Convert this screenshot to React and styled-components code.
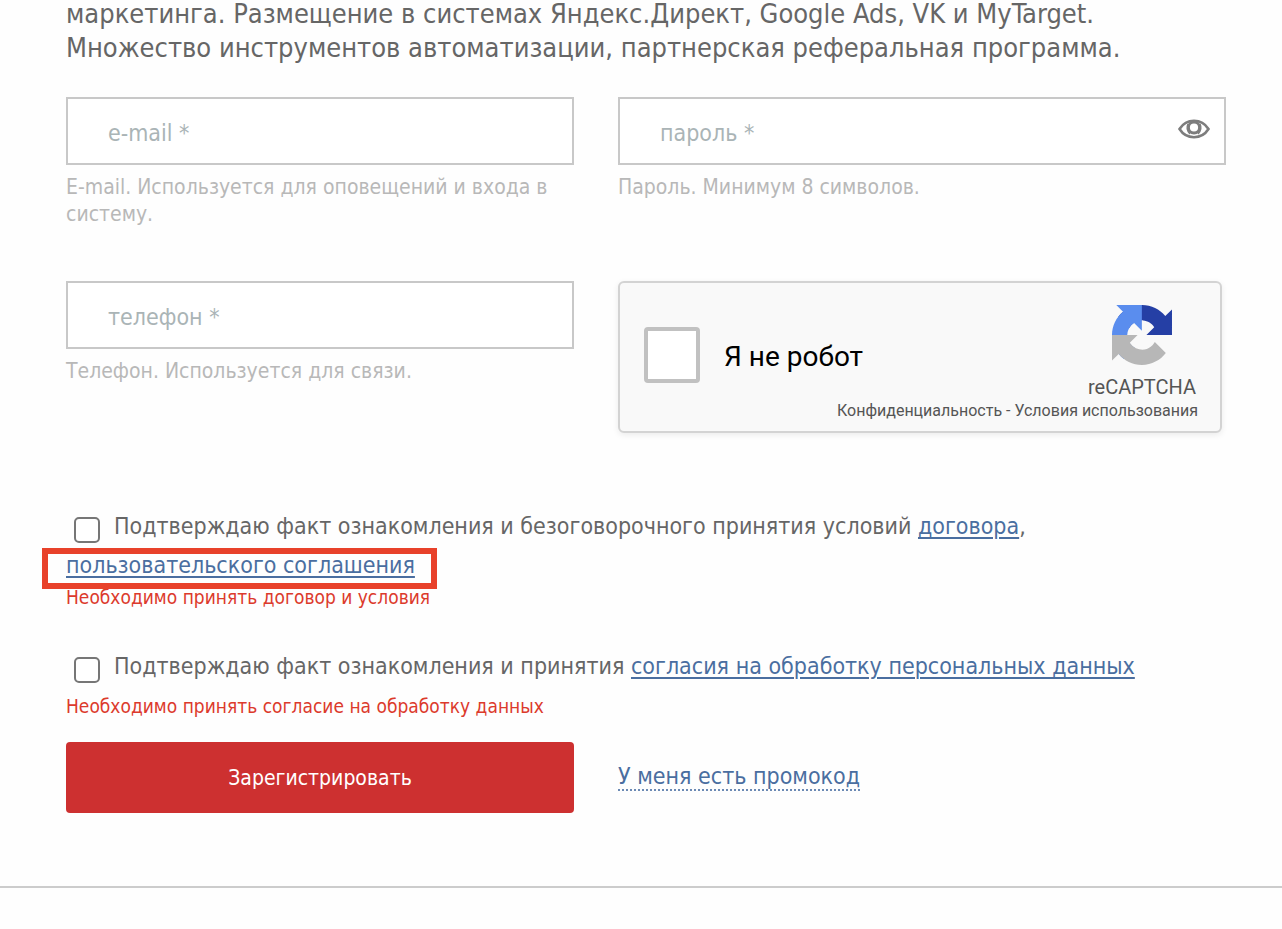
import React, { useState } from 'react';
import styled, { createGlobalStyle } from 'styled-components';

const GlobalStyle = createGlobalStyle`
    * {
        box-sizing: border-box;
    }
    body {
        margin: 0;
        background: #fefefe;
        color: #666;
        font-family: Tahoma, 'DejaVu Sans Condensed', 'Noto Sans', sans-serif;
        font-size: 23px;
        overflow: hidden;
    }
`;

const Page = styled.main`
    padding: 0 56px 73px 66px;
    border-bottom: 2px solid #ccc;
`;

const Intro = styled.p`
    margin: -3px 0 32px;
    font-size: 27px;
    line-height: 34px;
`;

const Columns = styled.div`
    display: grid;
    grid-template-columns: 127fr 152fr;
    column-gap: 44px;
    align-items: ${props => props.align || 'start'};
`;

const Fields = styled(Columns)`
    row-gap: 53px;
`;

const InputBox = styled.div`
    display: flex;
    align-items: center;
    height: 68px;
    border: 2px solid #c8c8c8;
    background: #fff;
    padding: 0 14px 0 40px;
`;

const Input = styled.input`
    flex: 1;
    min-width: 0;
    height: 64px;
    padding: 4px 0 0;
    border: 0;
    outline: 0;
    background: none;
    color: #666;
    font: inherit;
    &::placeholder {
        color: #aab4b6;
        opacity: 1;
    }
`;

const Hint = styled.label`
    display: block;
    margin-top: 9px;
    font-size: 21px;
    line-height: 27px;
    color: #b8b8b8;
`;

const EyeButton = styled.button`
    display: flex;
    padding: 0 0 4px;
    border: 0;
    background: none;
    cursor: pointer;
`;

const Captcha = styled.div`
    display: flex;
    align-items: center;
    gap: 24px;
    height: 152px;
    margin-right: 4px;
    padding: 0 22px 4px 24px;
    border: 2px solid #d3d3d3;
    border-radius: 6px;
    background: #f9f9f9;
    box-shadow: 0 2px 6px rgba(0, 0, 0, 0.08);
    font-family: Roboto, sans-serif;
`;

const CaptchaCheck = styled.input`
    appearance: none;
    flex: none;
    width: 56px;
    height: 56px;
    margin: 0;
    border: 4px solid #c1c1c1;
    border-radius: 4px;
    background: #fff;
`;

const CaptchaLabel = styled.label`
    flex: 1;
    padding-top: 4px;
    font-size: 28px;
    line-height: 34px;
    white-space: nowrap;
    color: #000;
`;

const CaptchaBrand = styled.div`
    display: flex;
    flex-direction: column;
    align-items: flex-end;
    align-self: flex-end;
    width: 0;
    padding-bottom: 4px;
    color: #555;
    font-size: 20px;
    line-height: 24px;
    white-space: nowrap;
    svg {
        margin: 0 26px 10px 0;
    }
`;

const CaptchaName = styled.span`
    padding-right: 2px;
`;

const CaptchaLinks = styled.div`
    font-size: 16px;
    a {
        color: #555;
        text-decoration: none;
    }
`;

const Agreements = styled.div`
    margin-top: ${props => (props.first ? '74px' : '38px')};
`;

const Agreement = styled.div`
    line-height: 39px;
`;

const Check = styled.input`
    appearance: none;
    width: 26px;
    height: 26px;
    margin: 0 14px 0 8px;
    border: 2px solid #767676;
    border-radius: 5px;
    background: #fff;
    vertical-align: -9px;
`;

const Link = styled.a`
    color: #4a6ea0;
    text-decoration: underline;
    text-decoration-thickness: 2px;
    text-underline-offset: 3px;
`;

const MarkedLink = styled(Link)`
    position: relative;
    display: inline-block;
    &::after {
        content: '';
        position: absolute;
        inset: 2px -22px -4px -24px;
        border: 6px solid #e8412a;
    }
`;

const ErrorText = styled.p`
    margin: ${props => (props.spaced ? '8px' : '0')} 0 0;
    font-size: 19px;
    line-height: 24px;
    color: #dc3a2c;
`;

const Actions = styled(Columns)`
    margin-top: 24px;
`;

const Submit = styled.button`
    height: 71px;
    padding: 0;
    border: 0;
    border-radius: 4px;
    background: #cd3030;
    color: #fff;
    font: inherit;
    font-size: 21px;
    cursor: pointer;
`;

const PromoLink = styled.a`
    justify-self: start;
    line-height: 24px;
    padding-bottom: 1px;
    color: #4a6ea0;
    text-decoration: none;
    border-bottom: 2px dotted #6c8ab4;
`;

const Eye = () => (
    <svg width='32' height='20' viewBox='0 0 32 20' fill='none' stroke='#7d7d7d'>
        <path d='M1.5 10C5 4.500 10 1.800 16 1.800S27 4.500 30.500 10C27 15.500 22 18.200 16 18.200S5 15.500 1.500 10Z' strokeWidth='2.600' />
        <circle cx='16' cy='8.500' r='5.500' strokeWidth='2.800' />
        <path d='M10 5Q7.500 10 12 15M22 5Q24.500 10 20 15' strokeWidth='1.500' />
    </svg>
);

const CaptchaLogo = () => (
    <svg width='60' height='60' viewBox='0 0 64 64'>
        <path fill='#253fa5' d='M64 31.955l-.033-1.37V4.687l-7.16 7.16C50.948 4.674 42.033.093 32.05.093c-10.4 0-19.622 4.96-25.458 12.64l11.736 11.86a15.55 15.55 0 0 1 4.754-5.334c2.05-1.6 4.952-2.906 8.968-2.906.485 0 .86.057 1.135.163 4.976.393 9.288 3.14 11.828 7.124l-8.307 8.307L64 31.953' />
        <path fill='#5a8dee' d='M31.862.094l-1.37.033H4.594l7.16 7.16C4.58 13.147 0 22.06 0 32.046c0 10.4 4.96 19.622 12.64 25.458L24.5 45.768a15.55 15.55 0 0 1-5.334-4.754c-1.6-2.05-2.906-4.952-2.906-8.968 0-.485.057-.86.163-1.135.393-4.976 3.14-9.288 7.124-11.828l8.307 8.307L31.86.095' />
        <path fill='#b7b7b7' d='M.001 32.045l.033 1.37v25.898l7.16-7.16c5.86 7.173 14.774 11.754 24.76 11.754 10.4 0 19.622-4.96 25.458-12.64l-11.736-11.86a15.55 15.55 0 0 1-4.754 5.334c-2.05 1.6-4.952 2.906-8.968 2.906-.485 0-.86-.057-1.135-.163-4.976-.393-9.288-3.14-11.828-7.124l8.307-8.307c-10.522.04-22.4.066-27.295-.005' />
    </svg>
);

const App = () => {
    const [visible, setVisible] = useState(false);

    return (
        <>
            <GlobalStyle />
            <Page>
                <Intro>
                    маркетинга. Размещение в системах Яндекс.Директ, Google Ads, VK и MyTarget.
                    <br />
                    Множество инструментов автоматизации, партнерская реферальная программа.
                </Intro>
                <form onSubmit={e => e.preventDefault()}>
                    <Fields>
                        <div>
                            <InputBox>
                                <Input id='email' type='email' placeholder='e-mail *' />
                            </InputBox>
                            <Hint htmlFor='email'>
                                E-mail. Используется для оповещений и входа в систему.
                            </Hint>
                        </div>
                        <div>
                            <InputBox>
                                <Input
                                    id='password'
                                    type={visible ? 'text' : 'password'}
                                    placeholder='пароль *'
                                />
                                <EyeButton
                                    type='button'
                                    aria-label='Показать пароль'
                                    onClick={() => setVisible(!visible)}
                                >
                                    <Eye />
                                </EyeButton>
                            </InputBox>
                            <Hint htmlFor='password'>Пароль. Минимум 8 символов.</Hint>
                        </div>
                        <div>
                            <InputBox>
                                <Input id='phone' type='tel' placeholder='телефон *' />
                            </InputBox>
                            <Hint htmlFor='phone'>Телефон. Используется для связи.</Hint>
                        </div>
                        <Captcha>
                            <CaptchaCheck id='robot' type='checkbox' />
                            <CaptchaLabel htmlFor='robot'>Я не робот</CaptchaLabel>
                            <CaptchaBrand>
                                <CaptchaLogo />
                                <CaptchaName>reCAPTCHA</CaptchaName>
                                <CaptchaLinks>
                                    <a href='#privacy'>Конфиденциальность</a> -{' '}
                                    <a href='#terms'>Условия использования</a>
                                </CaptchaLinks>
                            </CaptchaBrand>
                        </Captcha>
                    </Fields>
                    <Agreements first>
                        <Agreement>
                            <Check id='contract' type='checkbox' />
                            <label htmlFor='contract'>
                                Подтверждаю факт ознакомления и безоговорочного принятия условий{' '}
                                <Link href='#contract'>договора</Link>,{' '}
                                <MarkedLink href='#agreement'>
                                    пользовательского соглашения
                                </MarkedLink>
                            </label>
                        </Agreement>
                        <ErrorText>Необходимо принять договор и условия</ErrorText>
                    </Agreements>
                    <Agreements>
                        <Agreement>
                            <Check id='personal' type='checkbox' />
                            <label htmlFor='personal'>
                                Подтверждаю факт ознакомления и принятия{' '}
                                <Link href='#personal'>
                                    согласия на обработку персональных данных
                                </Link>
                            </label>
                        </Agreement>
                        <ErrorText spaced>Необходимо принять согласие на обработку данных</ErrorText>
                    </Agreements>
                    <Actions align='center'>
                        <Submit type='submit'>Зарегистрировать</Submit>
                        <PromoLink href='#promo'>У меня есть промокод</PromoLink>
                    </Actions>
                </form>
            </Page>
        </>
    );
};

export default App;
